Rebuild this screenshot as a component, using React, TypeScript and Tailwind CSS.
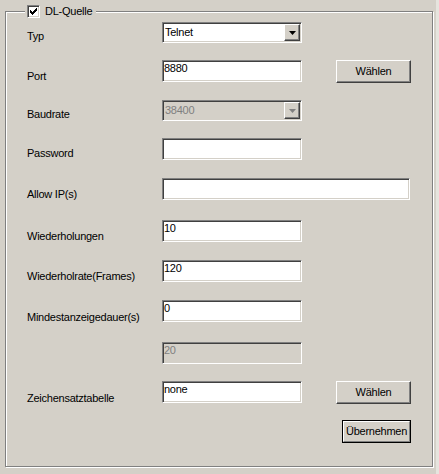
import React from "react";

// Win classic 3D edges
const sunken =
  "border border-t-[#808080] border-l-[#808080] border-r-white border-b-white shadow-[inset_1px_1px_0_#404040,inset_-1px_-1px_0_#d4d0c8]";
const raised =
  "border border-t-white border-l-white border-r-[#404040] border-b-[#404040] shadow-[inset_-1px_-1px_0_#808080]";

type Kind = "select" | "select-off" | "input" | "input-off" | "wide" | "none";

type Row = {
  label?: string;
  kind: Kind;
  value?: string;
  h: string;
  pt?: string;
  button?: boolean;
};

const rows: Row[] = [
  { label: "Typ", kind: "select", value: "Telnet", h: "h-[38px]", pt: "pt-[8px]" },
  { label: "Port", kind: "input", value: "8880", h: "h-[40px]", pt: "pt-[10px]", button: true },
  { label: "Baudrate", kind: "select-off", value: "38400", h: "h-[38px]", pt: "pt-[8px]" },
  { label: "Password", kind: "input", value: "", h: "h-[40px]", pt: "pt-[9px]" },
  { label: "Allow IP(s)", kind: "wide", value: "", h: "h-[42px]", pt: "pt-[10px]" },
  { label: "Wiederholungen", kind: "input", value: "10", h: "h-[40px]", pt: "pt-[10px]" },
  { label: "Wiederholrate(Frames)", kind: "input", value: "120", h: "h-[40px]", pt: "pt-[10px]" },
  { label: "Mindestanzeigedauer(s)", kind: "input", value: "0", h: "h-[42px]", pt: "pt-[11px]" },
  { kind: "input-off", value: "20", h: "h-[39px]" },
  { label: "Zeichensatztabelle", kind: "input", value: "none", h: "h-[39px]", pt: "pt-[11px]", button: true },
];

function Arrow({ off }: { off?: boolean }) {
  return (
    <svg width="7" height="4" viewBox="0 0 7 4">
      <path d="M0 0h7L3.5 4z" fill={off ? "#808080" : "#000"} />
    </svg>
  );
}

function Combo({ value, off }: { value: string; off?: boolean }) {
  return (
    <div className={`flex w-[140px] h-[21px] ${sunken} ${off ? "bg-[#d4d0c8]" : "bg-white"}`}>
      <div className={`flex-1 pl-[2px] pt-[3px] leading-[13px] ${off ? "text-[#808080]" : "text-black"}`}>{value}</div>
      <div className={`mt-[1px] mr-[1px] w-[16px] h-[17px] flex items-center justify-center bg-[#d4d0c8] ${raised}`}>
        <Arrow off={off} />
      </div>
    </div>
  );
}

function Field({ value, wide, off }: { value: string; wide?: boolean; off?: boolean }) {
  return (
    <div
      className={`${wide ? "w-[248px]" : "w-[140px]"} h-[22px] pl-[1px] pt-[1px] leading-[13px] ${sunken} ${
        off ? "bg-[#d4d0c8] text-[#808080]" : "bg-white text-black"
      }`}
    >
      {value}
    </div>
  );
}

function Button({ children }: { children: React.ReactNode }) {
  return (
    <div className={`w-[75px] h-[23px] flex items-center justify-center bg-[#d4d0c8] text-black ${raised}`}>
      {children}
    </div>
  );
}

export default function App() {
  return (
    <div className="w-[439px] h-[474px] bg-[#d4d0c8] border-r-[3px] border-[#e6e4de] pt-[11px] pl-[5px] text-[11px] leading-[13px] tracking-[-0.25px] text-black font-['Liberation_Sans',Arial,sans-serif]">
      {/* Gruppenrahmen */}
      <div className="relative w-[428px] h-[456px] border border-[#808080] shadow-[1px_1px_0_#fff,inset_1px_1px_0_#fff]">
        <div className="absolute left-[19px] top-[-7px] h-[13px] flex items-center gap-[5px] bg-[#d4d0c8] pl-[2px] pr-[4px]">
          <div className={`w-[13px] h-[13px] bg-white flex items-center justify-center ${sunken}`}>
            <svg width="7" height="7" viewBox="0 0 7 7">
              <path d="M0 2h1v1h1v1h1V3h1V2h1V1h1V0h1v3H6v1H5v1H4v1H3v1H2V6H1V5H0z" fill="#000" />
            </svg>
          </div>
          <span>DL-Quelle</span>
        </div>

        <div className="flex flex-col pt-[10px] pl-[21px] pr-[21px]">
          {rows.map((r, i) => (
            <div key={i} className={`flex items-start ${r.h}`}>
              <div className={`w-[135px] ${r.pt ?? ""}`}>{r.label}</div>
              {r.kind === "select" && <Combo value={r.value ?? ""} />}
              {r.kind === "select-off" && <Combo value={r.value ?? ""} off />}
              {r.kind === "input" && <Field value={r.value ?? ""} />}
              {r.kind === "input-off" && <Field value={r.value ?? ""} off />}
              {r.kind === "wide" && <Field value={r.value ?? ""} wide />}
              {r.button && (
                <div className="ml-[34px]">
                  <Button>Wählen</Button>
                </div>
              )}
            </div>
          ))}

          <div className="flex justify-end">
            <div className="w-[69px] h-[23px] border border-black">
              <div className="w-full h-full flex items-center justify-center bg-[#d4d0c8] border border-t-white border-l-white border-r-[#808080] border-b-[#808080]">
                Übernehmen
              </div>
            </div>
          </div>
        </div>
      </div>
    </div>
  );
}
